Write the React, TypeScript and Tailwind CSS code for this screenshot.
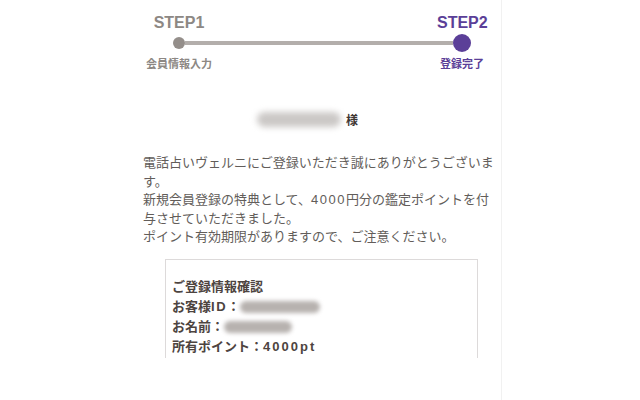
import React from "react";

const font = {
  fontFamily: '"Liberation Sans", "Noto Sans CJK JP", sans-serif',
};

const Blur = ({ className }: { className: string }) => (
  <span className={"inline-block rounded-full blur-[2px] " + className} />
);

export default function App() {
  return (
    <div className="min-h-[400px] w-[640px] bg-white" style={font}>
      <div className="ml-[136px] w-[366px] min-h-[400px] border-r border-[#f1f1f1] pl-[7px] pr-[5px] pt-[13px]">
        {/* stepper */}
        <div className="ml-[1px] w-[343px]">
          <div className="flex justify-between text-[16px] font-bold leading-[20px]">
            <span className="w-[70px] text-center text-[#8d8884]">STEP1</span>
            <span className="w-[50px] text-center text-[#5b3f98]">STEP2</span>
          </div>
          <div className="mt-[1px] flex h-[18px] items-center pl-[29px] pr-[16px]">
            <span className="h-[12px] w-[12px] shrink-0 rounded-full bg-[#948e8a]" />
            <span className="h-[4px] flex-1 bg-[#b3aeab]" />
            <span className="h-[18px] w-[18px] shrink-0 rounded-full bg-[#5b3f98]" />
          </div>
          <div className="mt-[5px] flex justify-between text-[11px] font-bold leading-[14px]">
            <span className="w-[70px] text-center text-[#8d8884]">会員情報入力</span>
            <span className="w-[50px] text-center text-[#5b3f98]">登録完了</span>
          </div>
        </div>

        {/* greeting */}
        <div className="mt-[38px] flex h-[20px] items-center pl-[114px]">
          <Blur className="h-[15px] w-[84px] bg-[#cbc8c6] blur-[3px]" />
          <span className="ml-[5px] mt-[4px] text-[12px] font-bold text-[#3f3733]">様</span>
        </div>

        {/* message */}
        <p className="mt-[25px] text-[13px] leading-[18.5px] text-[#625d5a]">
          電話占いヴェルニにご登録いただき誠にありがとうございます。
          <br />
          新規会員登録の特典として、<span className="tracking-[1.5px]">4000</span>円分の鑑定ポイントを付与させていただきました。
          <br />
          ポイント有効期限がありますので、ご注意ください。
        </p>

        {/* info box */}
        <div className="ml-[22px] mt-[12px] w-[313px] border-x border-t border-[#dddada] pb-[1px] pl-[6px] pt-[17px] text-[13px] font-bold leading-[20px] text-[#4d4440]">
          <div>ご登録情報確認</div>
          <div className="flex items-center">
            <span>
              お客様<span className="tracking-[1.5px]">ID</span>：
            </span>
            <Blur className="h-[12px] w-[80px] bg-[#b7b2af]" />
          </div>
          <div className="flex items-center">
            <span>お名前：</span>
            <Blur className="h-[12px] w-[68px] bg-[#b7b2af]" />
          </div>
          <div>
            所有ポイント：<span className="tracking-[2px]">4000pt</span>
          </div>
        </div>
      </div>
    </div>
  );
}
